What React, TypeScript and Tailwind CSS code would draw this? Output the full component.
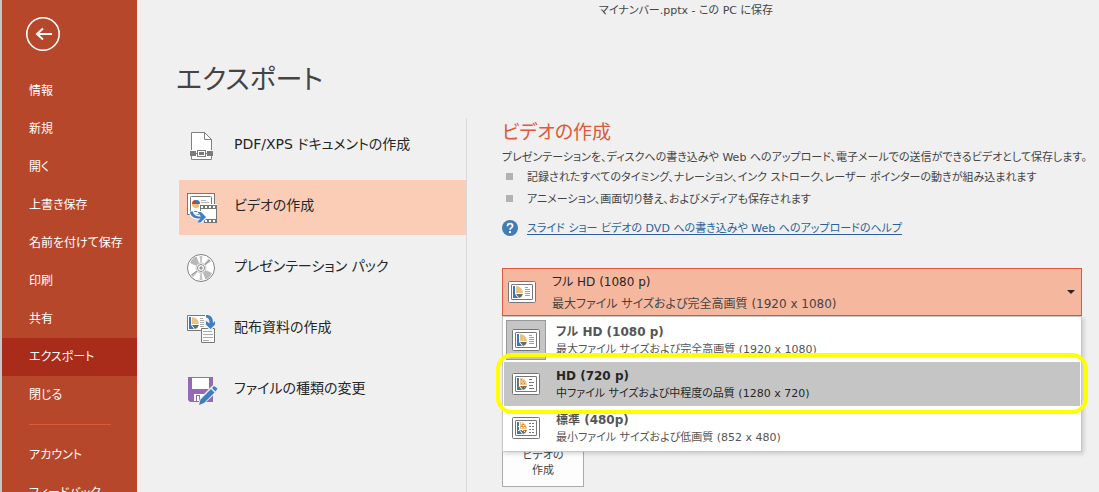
import type { ReactNode } from 'react';

type Quality = { title: string; detail: string; grain: 'none' | 'light' | 'coarse' };

const qualities: Quality[] = [
  { title: 'フル HD (1080 p)', detail: '最大ファイル サイズおよび完全高画質 (1920 x 1080)', grain: 'none' },
  { title: 'HD (720 p)', detail: '中ファイル サイズおよび中程度の品質 (1280 x 720)', grain: 'light' },
  { title: '標準 (480p)', detail: '最小ファイル サイズおよび低画質 (852 x 480)', grain: 'coarse' },
];

const menu = ['情報', '新規', '開く', '上書き保存', '名前を付けて保存', '印刷', '共有', 'エクスポート', '閉じる'];

function SlideIcon({ grain }: { grain: Quality['grain'] }) {
  return (
    <svg width="28" height="22" viewBox="0 0 28 22" className="shrink-0" aria-hidden="true">
      <rect x="0.5" y="0.5" width="27" height="21" rx="1" fill="#fff" stroke="#777" />
      <rect x="3.5" y="3.5" width="21" height="15" rx="0.5" fill="#fff" stroke="#777" />
      <path d="M5 5h2v8l3 4H5z" fill="#3a78b5" />
      <path d="M8 5a7 7 0 0 1 7 7H8z" fill="#eac282" />
      <path d="M8 13h7a6 6 0 0 1-4 4z" fill="#6a6a6a" />
      {grain === 'none' && <path d="M17 6.500h3M17 8.500h5M17 10.500h5M17 12.500h5M17 14.500h5" stroke="#a0a0a0" />}
      {grain === 'light' && <path d="M17 6.500h3M17 9.500h5M17 12.500h4M17 15.500h5" stroke="#777" />}
      {grain === 'coarse' && (
        <path d="M17 6.500h5M17 9.500h5M17 12.500h5M17 15.500h5" stroke="#777" strokeDasharray="2 1" />
      )}
      {grain !== 'none' && (
        <path
          d="M9 6.500h1M11 8.500h1M9 10.500h1M12 10.500h1M6 13.500h1M6 9.500h1M10 13.500h1M12 14.500h1"
          stroke={grain === 'light' ? '#d08a3c' : '#fff'}
        />
      )}
      {grain === 'coarse' && <path d="M10 7.500h2M9 9.500h2M12 9.500h2M11 13.500h2" stroke="#e08a2c" />}
    </svg>
  );
}

function PdfIcon() {
  return (
    <svg width="30" height="30" viewBox="0 1 30 30" aria-hidden="true">
      <path d="M4.500 19V1.500h13l7 7V19" fill="#fff" stroke="#808080" />
      <path d="M17.500 1.500v7h7z" fill="#fff" stroke="#808080" />
      <path d="M4.500 25v3.500h20V25" fill="#fff" stroke="#808080" />
      <path d="M5 19h19v6H5z" fill="#fff" />
      <path d="M3 20h6v5H3zM20 20h6v5h-6z" fill="#7b7b7b" />
      <path d="M9 22.500h11" stroke="#7b7b7b" />
      <rect x="10.500" y="19.500" width="8" height="6" fill="#fff" stroke="#7b7b7b" />
      <rect x="12" y="21" width="5" height="3" fill="#7b7b7b" />
    </svg>
  );
}

function VideoIcon() {
  return (
    <svg width="30" height="30" viewBox="0 0 30 30" aria-hidden="true">
      <rect x="0.500" y="0.500" width="27" height="21" fill="#fff" stroke="#777" />
      <rect x="3.500" y="3.500" width="21" height="15" rx="1" fill="#fff" stroke="#777" />
      <circle cx="9" cy="11" r="4" fill="#e9bd7a" />
      <path d="M9 11V7a4 4 0 0 1 4 4z" fill="#3a78b5" />
      <path d="M9 11H5a4 4 0 0 1 4-4z" fill="#c8452c" />
      <path d="M14 7.500h5M14 9.500h8" stroke="#b5b5b5" />
      <path d="M12 11h18v19H18V22h-6z" fill="#fff" />
      <path d="M13 12h17v4H13zM17 26h13v4H17z" fill="#767676" />
      <path d="M29.500 14v14M13.500 14v4M20.500 26v4" stroke="#767676" />
      <path d="M14 14h15M18 28h11" stroke="#fff" strokeWidth="2" strokeDasharray="2 2" />
      <path d="M2 18h5c1 3 3 4 6 4l-3-4h4l7 6-7 6.500h-5l4-4C7 27 2 24 2 18z" fill="#fff" />
      <path d="M3 18.500h3c.5 3.500 3 5 8 5l-3.500-4.500H14l5 5-5.500 5.500H10l3.500-4C7 26 3 23 3 18.500z" fill="#3f7fc0" />
    </svg>
  );
}

function DiscIcon() {
  return (
    <svg width="30" height="30" viewBox="0 1 30 30" aria-hidden="true">
      <circle cx="14" cy="15" r="13.500" fill="#fff" stroke="#808080" />
      <path d="M14 15 3 10a12 12 0 0 1 6.500-6.500zM14 15l11 5a12 12 0 0 1-6.500 6.500z" fill="#b9b9b9" />
      <path d="M14 15 12.500 3h3zM14 15l-1.500 12h3zM14 15l7.500-9.500 2.500 3zM14 15l-8 9.500-2-3z" fill="#c4c4c4" />
      <path d="m14 15 9-8M14 15l-9.500 7" stroke="#8c8c8c" />
      <circle cx="14" cy="15" r="5" fill="#fff" stroke="#c8c8c8" />
      <circle cx="14" cy="15" r="3.500" fill="#fff" stroke="#8c8c8c" />
      <circle cx="14" cy="15" r="1.200" fill="#bbb" stroke="#8c8c8c" />
    </svg>
  );
}

function HandoutIcon() {
  return (
    <svg width="30" height="30" viewBox="0 1 30 30" aria-hidden="true">
      <path d="M19 1.500H.5v15H18" fill="#fff" stroke="#777" />
      <path d="M19 2h1v14h-2z" fill="#fff" />
      <path d="M2 3h2v8l3 4H2z" fill="#3a78b5" />
      <path d="M5 3a8 8 0 0 1 7 7H5z" fill="#eac282" />
      <path d="M5 11h7a6 6 0 0 1-4 4z" fill="#6a6a6a" />
      <path d="M13 4.500h3M13 6.500h4M13 8.500h4M13 10.500h4M13 12.500h4" stroke="#aaa" />
      <path d="M14.500 14.500h13v14h-13z" fill="#fff" stroke="#777" />
      <path d="M16 17.500h9M16 20.500h10M16 23.500h10M16 26.500h6" stroke="#aaa" />
      <path d="M18 0h3c5 1 6 4 6 8h3l-6 9-7-6V6h6c-1-2-2-3-5-3z" fill="#f0f0f0" />
      <path d="M19 1c5 0 7 2.500 7 8l2-2v3.500L23.500 15 19 10.500V7l3.500 2.500C22.500 5 21.500 4 19 3.500z" fill="#3f7fc0" />
    </svg>
  );
}

function FileTypeIcon() {
  return (
    <svg width="31" height="30" viewBox="0 1 31 30" aria-hidden="true">
      <path d="M1 2h25v25H3l-2-2z" fill="#9568b8" />
      <path d="M5 3h17v11H5z" fill="#fff" />
      <path d="M7 19h13v7H7z" fill="#fff" />
      <path d="M9 20h4v6H9z" fill="#9568b8" />
      <path d="M10 21h2v5h-2z" fill="#fff" />
      <path d="m11 30 2-7L26 10l5 3v3L18 28z" fill="#f0f0f0" />
      <path d="m12 30 1.500-5.500L24 14l3.500 3.500L17 28zM25 13l2-2 3.500 2.500-2 3z" fill="#3f7fc0" />
    </svg>
  );
}

const exportKinds: { label: string; icon: ReactNode; active?: boolean }[] = [
  { label: 'PDF/XPS ドキュメントの作成', icon: <PdfIcon /> },
  { label: 'ビデオの作成', icon: <VideoIcon />, active: true },
  { label: 'プレゼンテーション パック', icon: <DiscIcon /> },
  { label: '配布資料の作成', icon: <HandoutIcon /> },
  { label: 'ファイルの種類の変更', icon: <FileTypeIcon /> },
];

function Sidebar() {
  return (
    <nav
      aria-label="ファイル"
      className="w-[137px] shrink-0 border-l-2 border-[#c6c6c6] bg-[#b7472a] pt-4 text-xs text-white"
    >
      <button type="button" aria-label="戻る" className="ml-6 block">
        <svg width="36" height="36" viewBox="0 0 36 36" fill="none" stroke="#fff" aria-hidden="true">
          <circle cx="17" cy="18" r="16.200" strokeWidth="1.600" />
          <path d="M26 18H11M17 12.500 11 18l6 5.500" strokeWidth="2" />
        </svg>
      </button>
      <ul className="mt-5">
        {menu.map((label) => (
          <li key={label}>
            <button
              type="button"
              className={`flex h-[38px] w-full items-center pl-[27px] ${label === 'エクスポート' ? 'bg-[#a92b1a]' : ''}`}
            >
              {label}
            </button>
          </li>
        ))}
      </ul>
      <hr className="mr-[26px] ml-[27px] mt-[10px] mb-[11px] border-[#dc5939]" />
      <ul>
        {['アカウント', 'フィードバック'].map((label) => (
          <li key={label}>
            <button type="button" className="flex h-[38px] w-full items-center pl-[27px]">
              {label}
            </button>
          </li>
        ))}
      </ul>
    </nav>
  );
}

function QualityPicker() {
  return (
    <div className="relative mt-[29px] max-w-[580px]">
      <button
        type="button"
        role="combobox"
        aria-expanded="true"
        aria-controls="quality-list"
        aria-label="ビデオの品質"
        className="flex h-12 w-full items-center border border-[#dc5939] bg-[#f5b89e] pl-[5px] pr-1.5 text-left text-xs"
      >
        <SlideIcon grain="none" />
        <span className="ml-4 flex-1 pt-0.5 leading-[22px]">
          <span className="block text-[#262626]">{qualities[0].title}</span>
          <span className="block text-[#444]">{qualities[0].detail}</span>
        </span>
        <svg width="8" height="4" viewBox="0 0 8 4" aria-hidden="true">
          <path d="M0 0h8L4 4z" fill="#262626" />
        </svg>
      </button>
      <ul
        id="quality-list"
        role="listbox"
        aria-label="ビデオの品質"
        className="absolute inset-x-0 top-12 border border-[#c6c6c6] bg-white p-px shadow-[2px_2px_4px_rgba(0,0,0,0.15)]"
      >
        {qualities.map((q, i) => (
          <li
            key={q.title}
            role="option"
            aria-selected={i === 0}
            className={`flex h-11 items-center pl-0.5 ${i === 1 ? 'bg-[#c5c5c5] text-[#262626]' : 'text-[#555]'}`}
          >
            <span
              className={`flex size-10 shrink-0 items-center justify-center border ${
                i === 0 ? 'border-[#999] bg-[#c5c5c5]' : 'border-transparent'
              }`}
            >
              <SlideIcon grain={q.grain} />
            </span>
            <span className="ml-2.5 pt-0.5">
              <span className="block text-xs leading-[17px] font-bold">{q.title}</span>
              <span className="block text-[11px] leading-[17px]">{q.detail}</span>
            </span>
          </li>
        ))}
      </ul>
      <div className="pointer-events-none absolute -inset-x-1.5 top-[85px] h-[61px] rounded-2xl border-4 border-[#ff0]" />
    </div>
  );
}

export default function App() {
  return (
    <div className="flex h-screen overflow-hidden bg-[#f0f0f0] font-['DejaVu_Sans','Noto_Sans_CJK_JP',sans-serif] whitespace-nowrap text-[#444] [font-feature-settings:'palt']">
      <Sidebar />
      <main className="min-w-0 flex-1">
        <header className="pl-[136px] text-center text-[11px] leading-[22px]">マイナンバー.pptx - この PC に保存</header>
        <h1 className="mt-[38px] pl-[39px] text-[27px] leading-10">エクスポート</h1>
        <div className="mt-[18px] flex">
          <ul className="ml-[42px] flex h-screen w-72 shrink-0 flex-col gap-1.5 border-r border-[#d9d9d9] pt-px">
            {exportKinds.map((kind) => (
              <li key={kind.label}>
                <button
                  type="button"
                  className={`flex h-[55px] w-full items-start gap-4 pl-2 text-left text-sm text-[#262626] ${
                    kind.active ? 'bg-[#fbcdb7]' : ''
                  }`}
                >
                  <span className="mt-[13px] w-[31px] shrink-0">{kind.icon}</span>
                  <span className="leading-[50px]">{kind.label}</span>
                </button>
              </li>
            ))}
          </ul>
          <section className="min-w-0 flex-1 pl-[35px] text-[11px]">
            <h2 className="pt-px text-[19px] leading-[26px] text-[#dc5939]">ビデオの作成</h2>
            <p className="pt-1 leading-[18px]">
              プレゼンテーションを、ディスクへの書き込みや Web へのアップロード、電子メールでの送信ができるビデオとして保存します。
            </p>
            <ul className="leading-[22px]">
              {[
                '記録されたすべてのタイミング、ナレーション、インク ストローク、レーザー ポインターの動きが組み込まれます',
                'アニメーション、画面切り替え、およびメディアも保存されます',
              ].map((t) => (
                <li key={t} className="flex items-start gap-3.5 pl-1">
                  <span className="mt-1.5 size-[7px] shrink-0 bg-[#b2b2b2]" />
                  {t}
                </li>
              ))}
            </ul>
            <div className="mt-1.5 flex h-[22px] items-center gap-[9px]">
              <svg width="16" height="16" viewBox="0 0 16 16" className="shrink-0" aria-hidden="true">
                <circle cx="8" cy="8" r="8" fill="#447cb5" />
                <path d="M5.500 6.200C5.500 4.500 6.500 3.700 8 3.700s2.600.8 2.600 2.200C10.600 7.600 8 7.700 8 9.800" fill="none" stroke="#fff" strokeWidth="1.700" />
                <path d="M7 11h2v2H7z" fill="#fff" />
              </svg>
              <a href="#help" className="pt-0.5 text-[#2a6199] underline underline-offset-2">
                スライド ショー ビデオの DVD への書き込みや Web へのアップロードのヘルプ
              </a>
            </div>
            <QualityPicker />
            <button
              type="button"
              className="mt-[84px] flex h-[87px] w-[82px] flex-col items-center justify-end border border-[#ababab] bg-[#fdfdfd] pb-2 text-[11px] leading-[15px] text-[#444]"
            >
              <span>ビデオの</span>
              <span>作成</span>
            </button>
          </section>
        </div>
      </main>
    </div>
  );
}
